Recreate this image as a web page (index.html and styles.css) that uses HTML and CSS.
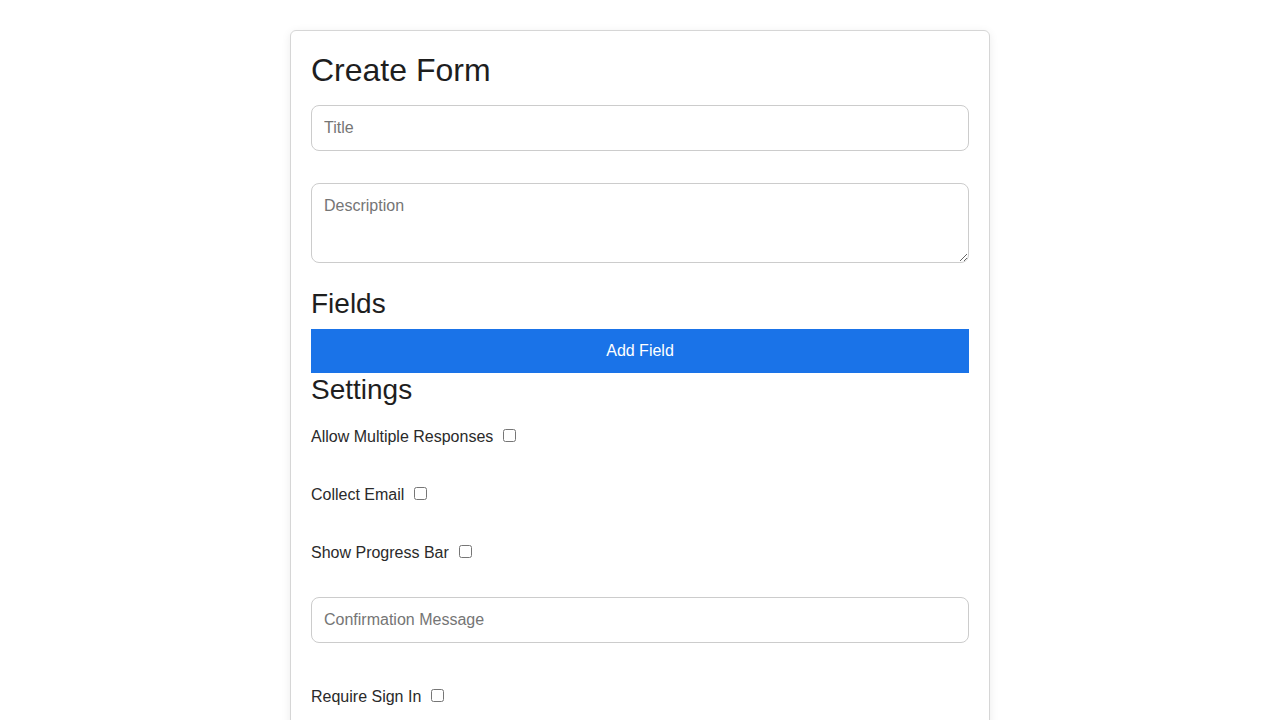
FILE: index.html
```html
<!DOCTYPE html>
<html>
<head>
<meta charset="utf-8">
<link rel="stylesheet" href="styles.css">
</head>
<body>
<div class="card">
  <h1 class="title">Create Form</h1>
  <input class="field field-title" type="text" placeholder="Title">
  <textarea class="field field-desc" placeholder="Description"></textarea>
  <h2 class="section">Fields</h2>
  <button class="add-btn" type="button">Add Field</button>
  <h2 class="section">Settings</h2>
  <div class="setting first"><label>Allow Multiple Responses</label><input type="checkbox" class="check"></div>
  <div class="setting"><label>Collect Email</label><input type="checkbox" class="check"></div>
  <div class="setting"><label>Show Progress Bar</label><input type="checkbox" class="check"></div>
  <input class="field field-confirm" type="text" placeholder="Confirmation Message">
  <div class="setting last"><label>Require Sign In</label><input type="checkbox" class="check"></div>
</div>
</body>
</html>
```
FILE: styles.css
```css
html, body {
  margin: 0;
  padding: 0;
  background: #fff;
}
body {
  font-family: "Liberation Sans", Arial, sans-serif;
  color: #222;
}
.card {
  width: 658px;
  margin: 30px auto 0;
  padding: 20px 20px 40px;
  border: 1px solid #d6d6d6;
  border-radius: 6px;
  box-shadow: 0 2px 10px rgba(0,0,0,0.08);
  display: flex;
  flex-direction: column;
}
.title {
  font-size: 32px;
  font-weight: normal;
  line-height: 38px;
  margin: 0 0 16px;
  color: #1e1e1e;
}
.field {
  box-sizing: border-box;
  width: 100%;
  font-family: "Liberation Sans", Arial, sans-serif;
  font-size: 16px;
  line-height: 24px;
  padding: 10px 12px;
  border: 1px solid #cccccc;
  border-radius: 8px;
  color: #222;
  margin: 0;
  outline: none;
}
.field::placeholder {
  color: #757575;
}
.field-title {
  height: 46px;
  margin-bottom: 32px;
}
.field-desc {
  height: 80px;
  resize: vertical;
  margin-bottom: 24px;
}
.section {
  font-size: 28px;
  font-weight: normal;
  line-height: 34px;
  margin: 0;
  color: #1e1e1e;
}
.add-btn {
  margin-top: 8px;
  height: 44px;
  width: 100%;
  border: none;
  border-radius: 0;
  background: #1a73e8;
  color: #fff;
  font-family: "Liberation Sans", Arial, sans-serif;
  font-size: 16px;
}
.setting {
  display: block;
  height: 18px;
  line-height: 18px;
  font-size: 16px;
  color: #2a2a2a;
  margin-top: 40px;
}
.setting.first {
  margin-top: 21px;
}
.check {
  width: 13px;
  height: 13px;
  margin: 0 0 2px 10px;
  vertical-align: baseline;
}
.field-confirm {
  height: 46px;
  margin-top: 35px;
}
.setting.last {
  margin-top: 45px;
}
```
